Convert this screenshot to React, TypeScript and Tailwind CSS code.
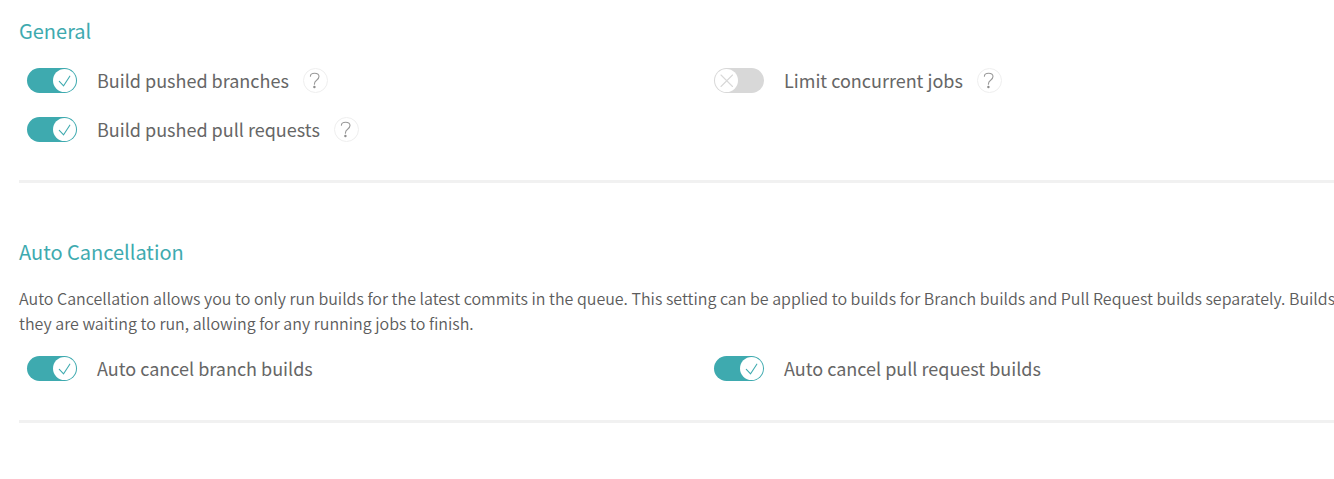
import { useId, useState } from "react";

type ToggleProps = {
  label: string;
  defaultOn?: boolean;
  help?: boolean;
};

function Toggle({ label, defaultOn = false, help = false }: ToggleProps) {
  const id = useId();
  const [on, setOn] = useState(defaultOn);

  return (
    <div className="flex h-[25px] items-center">
      <button
        id={id}
        type="button"
        role="switch"
        aria-checked={on}
        aria-labelledby={`${id}-label`}
        onClick={() => setOn(!on)}
        className={
          on
            ? "flex h-[25px] w-[50px] shrink-0 items-center justify-end rounded-full bg-[#3eaaaf] px-px"
            : "flex h-[25px] w-[50px] shrink-0 items-center justify-start rounded-full bg-[#d8d8d8] px-px"
        }
      >
        <svg viewBox="0 0 23 23" className="size-[23px]" fill="none" aria-hidden="true">
          <circle cx="11.5" cy="11.5" r="11.5" fill="#fff" />
          {on ? (
            <path d="M6.3 12.3 L10.6 16.8 L16.8 7.2" stroke="#3eaaaf" strokeWidth="1.1" strokeLinecap="round" strokeLinejoin="round" />
          ) : (
            <path d="M6 6 L17.5 17.5 M17.5 6 L6 17.5" stroke="#d8d8d8" strokeWidth="1.1" strokeLinecap="round" />
          )}
        </svg>
      </button>
      <label id={`${id}-label`} htmlFor={id} className="ml-5 pb-0.5 text-[18px] leading-6 whitespace-nowrap">
        {label}
      </label>
      {help && (
        <a href="#help" aria-label={`Help: ${label}`} className="ml-3.5 shrink-0">
          <svg viewBox="0 0 25 25" className="size-[25px]" fill="none" aria-hidden="true">
            <circle cx="12.5" cy="12.5" r="12" stroke="#eeeeee" />
            <path d="M7.4 8.2 C7.4 6.3 9.3 5.2 11.6 5.2 C14.3 5.2 16 6.5 16 8.6 C16 10.3 15 11.2 13.6 12.3 C12.1 13.4 11.4 14.1 11.4 16.3" stroke="#999999" strokeWidth="1.1" strokeLinecap="round" />
            <circle cx="11.4" cy="19" r="1.2" fill="#8c8c8c" />
          </svg>
        </a>
      )}
    </div>
  );
}

export default function App() {
  return (
    <main className="overflow-x-hidden bg-white pt-[19px] pb-14 pl-[19px] font-['Noto_Sans_CJK_SC',sans-serif] text-[#666666]">
      <div className="-mr-[67px]">
        <section className="border-b-3 border-[#f1f1f1] pb-[38px]">
          <h2 className="text-[20px] leading-6 text-[#3eaaaf]">General</h2>
          <div className="mt-[25px] grid grid-cols-2 gap-y-6 pl-2">
            <Toggle label="Build pushed branches" defaultOn help />
            <Toggle label="Limit concurrent jobs" help />
            <Toggle label="Build pushed pull requests" defaultOn help />
          </div>
        </section>
        <section className="mt-[57px] border-b-3 border-[#f1f1f1] pb-[39px]">
          <h2 className="text-[20px] leading-6 text-[#3eaaaf]">Auto Cancellation</h2>
          <p className="mt-[22px] text-[16px] leading-[25px] font-[350] whitespace-nowrap text-[#5c5c5c]">
            Auto Cancellation allows you to only run builds for the latest commits in the queue. This setting can be
            applied to builds for Branch builds and Pull Request builds separately. Builds w
            <br />
            they are waiting to run, allowing for any running jobs to finish.
          </p>
          <div className="mt-5 grid grid-cols-2 gap-y-6 pl-2">
            <Toggle label="Auto cancel branch builds" defaultOn />
            <Toggle label="Auto cancel pull request builds" defaultOn />
          </div>
        </section>
      </div>
    </main>
  );
}
